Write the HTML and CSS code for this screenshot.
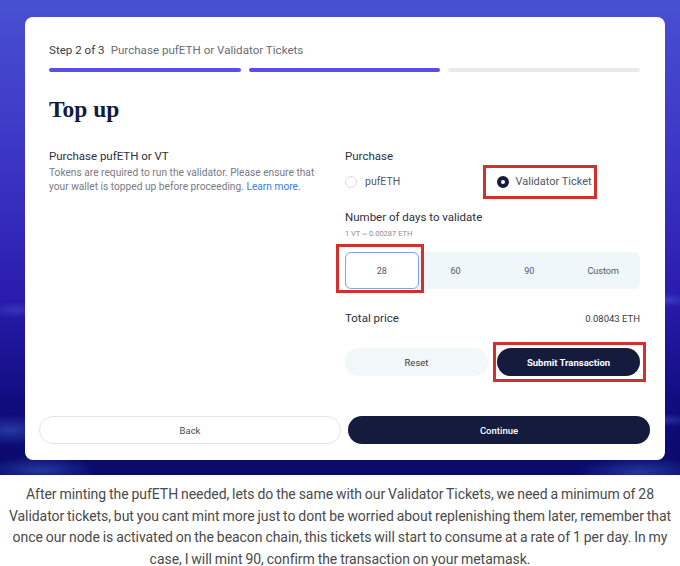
FILE: index.html
```html
<!DOCTYPE html>
<html lang="en">
<head>
<meta charset="utf-8">
<title>Top up</title>
<link rel="stylesheet" href="styles.css">
</head>
<body>
<div class="hero">
  <div class="card">
    <div class="head">
      <div class="step"><span class="step-num">Step 2 of 3</span><span class="step-title">Purchase pufETH or Validator Tickets</span></div>
      <div class="bars"><span class="bar on"></span><span class="bar on"></span><span class="bar"></span></div>
      <h1 class="title">Top up</h1>
    </div>
    <div class="body">
      <div class="left">
        <h2 class="label">Purchase pufETH or VT</h2>
        <p class="desc">Tokens are required to run the validator. Please ensure that your wallet is topped up before proceeding. <a class="link" href="#">Learn more.</a></p>
      </div>
      <div class="right">
        <h3 class="label">Purchase</h3>
        <div class="radios">
          <div class="radio"><span class="dot"></span><span>pufETH</span></div>
          <div class="radio"><span class="radio-inner mark mark-radio"><span class="dot on"></span><span>Validator Ticket</span></span></div>
        </div>
        <h3 class="label days-label">Number of days to validate</h3>
        <div class="rate">1 VT ~ 0.00287 ETH</div>
        <div class="days">
          <span class="day sel mark mark-day">28</span>
          <span class="day">60</span>
          <span class="day">90</span>
          <span class="day">Custom</span>
        </div>
        <div class="total"><span class="label">Total price</span><span class="price">0.08043 ETH</span></div>
        <div class="actions">
          <button class="btn light">Reset</button>
          <button class="btn dark mark mark-submit">Submit Transaction</button>
        </div>
      </div>
    </div>
    <div class="footer">
      <button class="btn outline big">Back</button>
      <button class="btn dark big">Continue</button>
    </div>
  </div>
</div>
<p class="caption">After minting the pufETH needed, lets do the same with our Validator Tickets, we need a minimum of 28 Validator tickets, but you cant mint more just to dont be worried about replenishing them later, remember that once our node is activated on the beacon chain, this tickets will start to consume at a rate of 1 per day. In my case, I will mint 90, confirm the transaction on your metamask.</p>
</body>
</html>
```
FILE: styles.css
```css
* { box-sizing: border-box; }
body {
  margin: 0;
  background: #fff;
  font-family: Roboto, "Liberation Sans", sans-serif;
}
.hero {
  height: 475px;
  padding: 17px 15px 0 25px;
  background:
    radial-gradient(ellipse 60px 22px at 10px 430px, rgba(70,110,220,0.45), transparent 70%),
    radial-gradient(ellipse 80px 20px at 40px 470px, rgba(60,100,210,0.5), transparent 70%),
    radial-gradient(ellipse 90px 22px at 640px 472px, rgba(60,100,210,0.5), transparent 70%),
    radial-gradient(ellipse 50px 10px at 660px 300px, rgba(80,110,230,0.45), transparent 70%),
    radial-gradient(ellipse 50px 10px at 660px 420px, rgba(80,110,230,0.4), transparent 70%),
    radial-gradient(ellipse 40px 12px at 15px 310px, rgba(80,100,220,0.35), transparent 70%),
    linear-gradient(180deg, #4850d2 0%, #3b34c4 35%, #2a1cae 62%, #0f0c7c 86%, #0a0a68 100%);
}
.card {
  width: 640px;
  height: 443px;
  background: #fff;
  border-radius: 8px;
  padding: 26px 15px 16px 14px;
  display: flex;
  flex-direction: column;
}
.head, .body { padding: 0 10px 0 10px; }
.step { font-size: 11.6px; line-height: 14px; display: flex; gap: 6px; }
.step-num { color: #3a3a44; }
.step-title { color: #6c6c74; }
.bars { display: grid; grid-template-columns: 1fr 1fr 1fr; gap: 8px; margin-top: 11px; }
.bar { height: 4px; border-radius: 2px; background: #e9e9ec; }
.bar.on { background: #5850e6; }
.title {
  margin: 23px 0 0;
  font-family: "Liberation Serif", "DejaVu Serif", serif;
  font-weight: 700;
  font-size: 23.5px;
  line-height: 28px;
  color: #141b3d;
}
.body {
  display: grid;
  grid-template-columns: 272px 1fr;
  column-gap: 24px;
  margin-top: 26px;
}
.label {
  margin: 0;
  font-size: 11.5px;
  line-height: 14px;
  font-weight: 400;
  color: #2d2f40;
}
.desc {
  margin: 3px 0 0;
  font-size: 10.2px;
  line-height: 14px;
  color: #7a7a82;
}
.link { color: #3f7bd6; text-decoration: none; }
.radios {
  display: grid;
  grid-template-columns: 1fr 1fr;
  margin-top: 12px;
  height: 14px;
}
.radio, .radio-inner {
  display: flex;
  align-items: center;
  gap: 8px;
  font-size: 10.5px;
  line-height: 14px;
  color: #55555e;
}
.radio-inner { gap: 7px; font-size: 11px; }
.radio:nth-child(2) { padding-left: 4px; }
.dot {
  width: 12px;
  height: 12px;
  border-radius: 50%;
  border: 1px solid #dcdce0;
  flex: none;
}
.dot.on {
  border: 4px solid #141b3d;
  background: #fff;
}
.days-label { margin-top: 21px; }
.rate {
  margin-top: 5px;
  font-size: 7.5px;
  line-height: 10px;
  color: #8a8a92;
}
.days {
  margin-top: 13px;
  height: 37px;
  display: grid;
  grid-template-columns: repeat(4, 1fr);
  background: #eff7fa;
  border-radius: 6px;
}
.day {
  display: flex;
  align-items: center;
  justify-content: center;
  font-size: 9px;
  color: #55555e;
  border-radius: 6px;
}
.day.sel {
  background: #fff;
  border: 1px solid #7fa3e6;
}
.total {
  margin-top: 22px;
  display: flex;
  justify-content: space-between;
  align-items: center;
}
.price { font-size: 9.5px; color: #3a3a44; }
.actions {
  margin-top: 23px;
  display: grid;
  grid-template-columns: 1fr 1fr;
  gap: 9px;
}
.btn {
  height: 28px;
  border: none;
  border-radius: 14px;
  font-family: Roboto, "Liberation Sans", sans-serif;
  font-size: 9.5px;
  padding: 0;
  cursor: pointer;
}
.btn.light { background: #f2f7fa; color: #3a3a44; }
.btn.dark { background: #141b3d; color: #fff; font-weight: 700; }
.btn.outline { background: #fff; border: 1px solid #e3e3e8; color: #4a4a55; }
.btn.big { font-size: 9.5px; }
.footer {
  margin-top: auto;
  display: grid;
  grid-template-columns: 1fr 1fr;
  gap: 7px;
}
.footer .btn.dark { font-weight: 500; }
.mark { position: relative; }
.mark::after {
  content: "";
  position: absolute;
  border: 3px solid #d1302f;
  pointer-events: none;
}
.mark-radio::after { left: -14px; right: -5px; top: -10px; bottom: -10px; }
.mark-day::after { left: -10px; right: -6px; top: -9px; bottom: -5px; }
.mark-submit::after { left: -4px; right: -6px; top: -6px; bottom: -6px; }
.caption {
  margin: 9px 0 0;
  padding: 0;
  text-align: center;
  font-size: 14px;
  line-height: 21.5px;
  letter-spacing: -0.05px;
  word-spacing: -0.5px;
  color: #4a4a4a;
}
```
